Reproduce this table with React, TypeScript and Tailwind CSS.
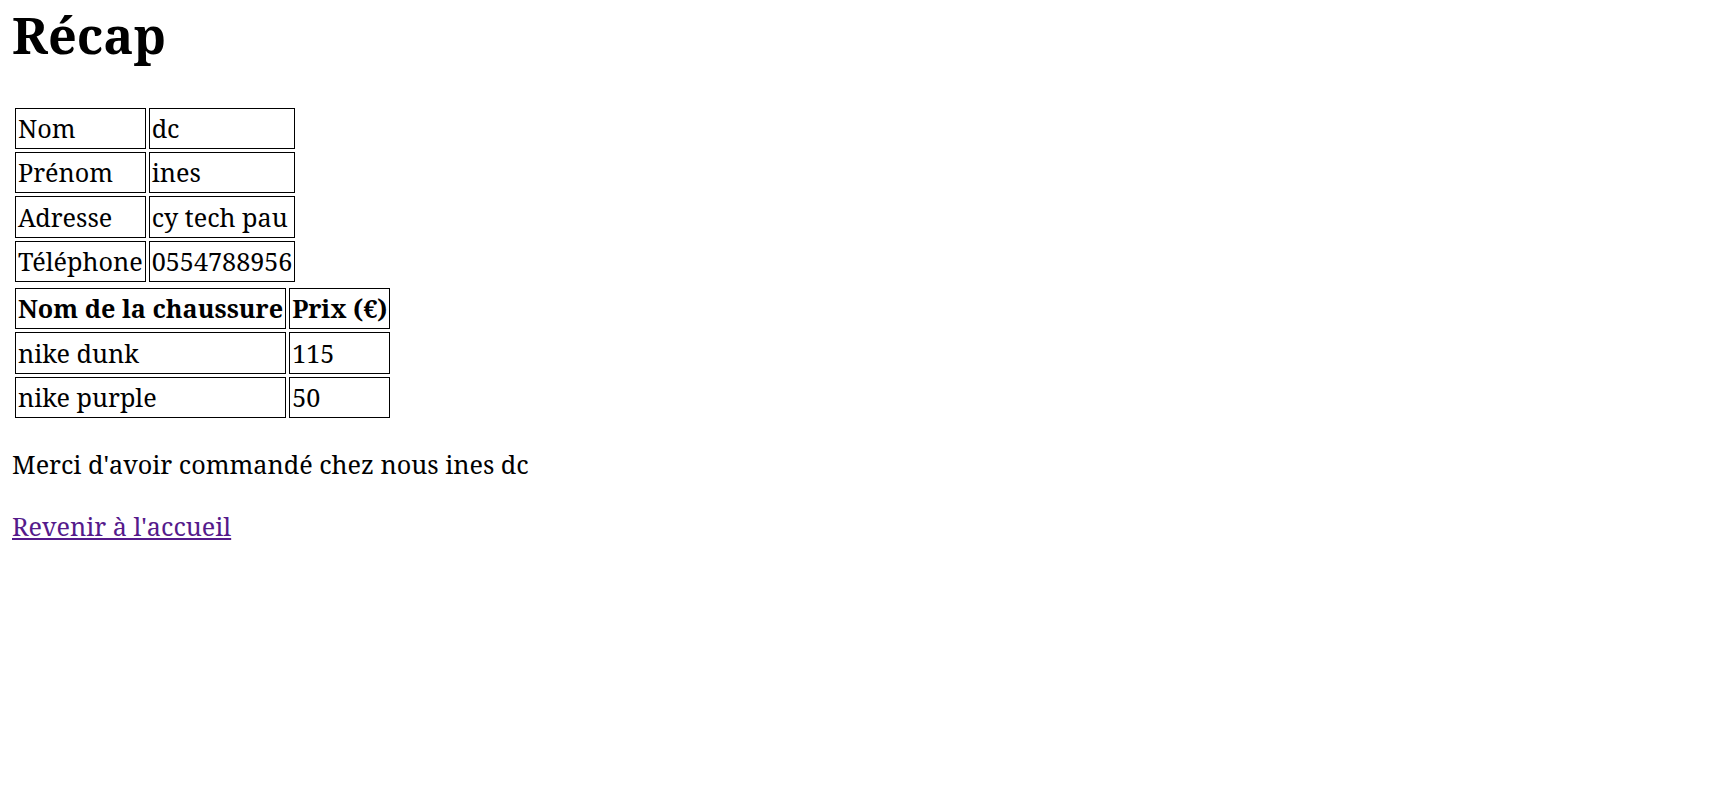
// Page récap de commande
const client = [
  ['Nom', 'dc'],
  ['Prénom', 'ines'],
  ['Adresse', 'cy tech pau'],
  ['Téléphone', '0554788956'],
]

const chaussures = [
  ['nike dunk', '115'],
  ['nike purple', '50'],
]

export default function App() {
  return (
    <div className="min-h-screen bg-white px-3 text-black font-['Noto_Serif',serif] text-[25.2px] leading-[1.362]">
      <h1 className="pt-[1px] pb-[35px] text-[50.4px] font-bold">Récap</h1>

      {/* infos client */}
      <table className="border-separate border-spacing-[3px]">
        <tbody>
          {client.map(([label, val]) => (
            <tr key={label}>
              <td className="border border-black px-[2px] py-[2.5px]">{label}</td>
              <td className="border border-black px-[2px] py-[2.5px]">{val}</td>
            </tr>
          ))}
        </tbody>
      </table>

      {/* panier */}
      <table className="border-separate border-spacing-[3px]">
        <thead>
          <tr>
            <th className="border border-black px-[2px] py-[2.5px] text-left">Nom de la chaussure</th>
            <th className="border border-black px-[2px] py-[2.5px] text-left">Prix (€)</th>
          </tr>
        </thead>
        <tbody>
          {chaussures.map(([nom, prix]) => (
            <tr key={nom}>
              <td className="border border-black px-[2px] py-[2.5px]">{nom}</td>
              <td className="border border-black px-[2px] py-[2.5px]">{prix}</td>
            </tr>
          ))}
        </tbody>
      </table>

      <p className="mt-[26px]">Merci d'avoir commandé chez nous ines dc</p>
      <p className="mt-[28px]">
        <a href="#" className="text-[#551a8b] underline">Revenir à l'accueil</a>
      </p>
    </div>
  )
}
